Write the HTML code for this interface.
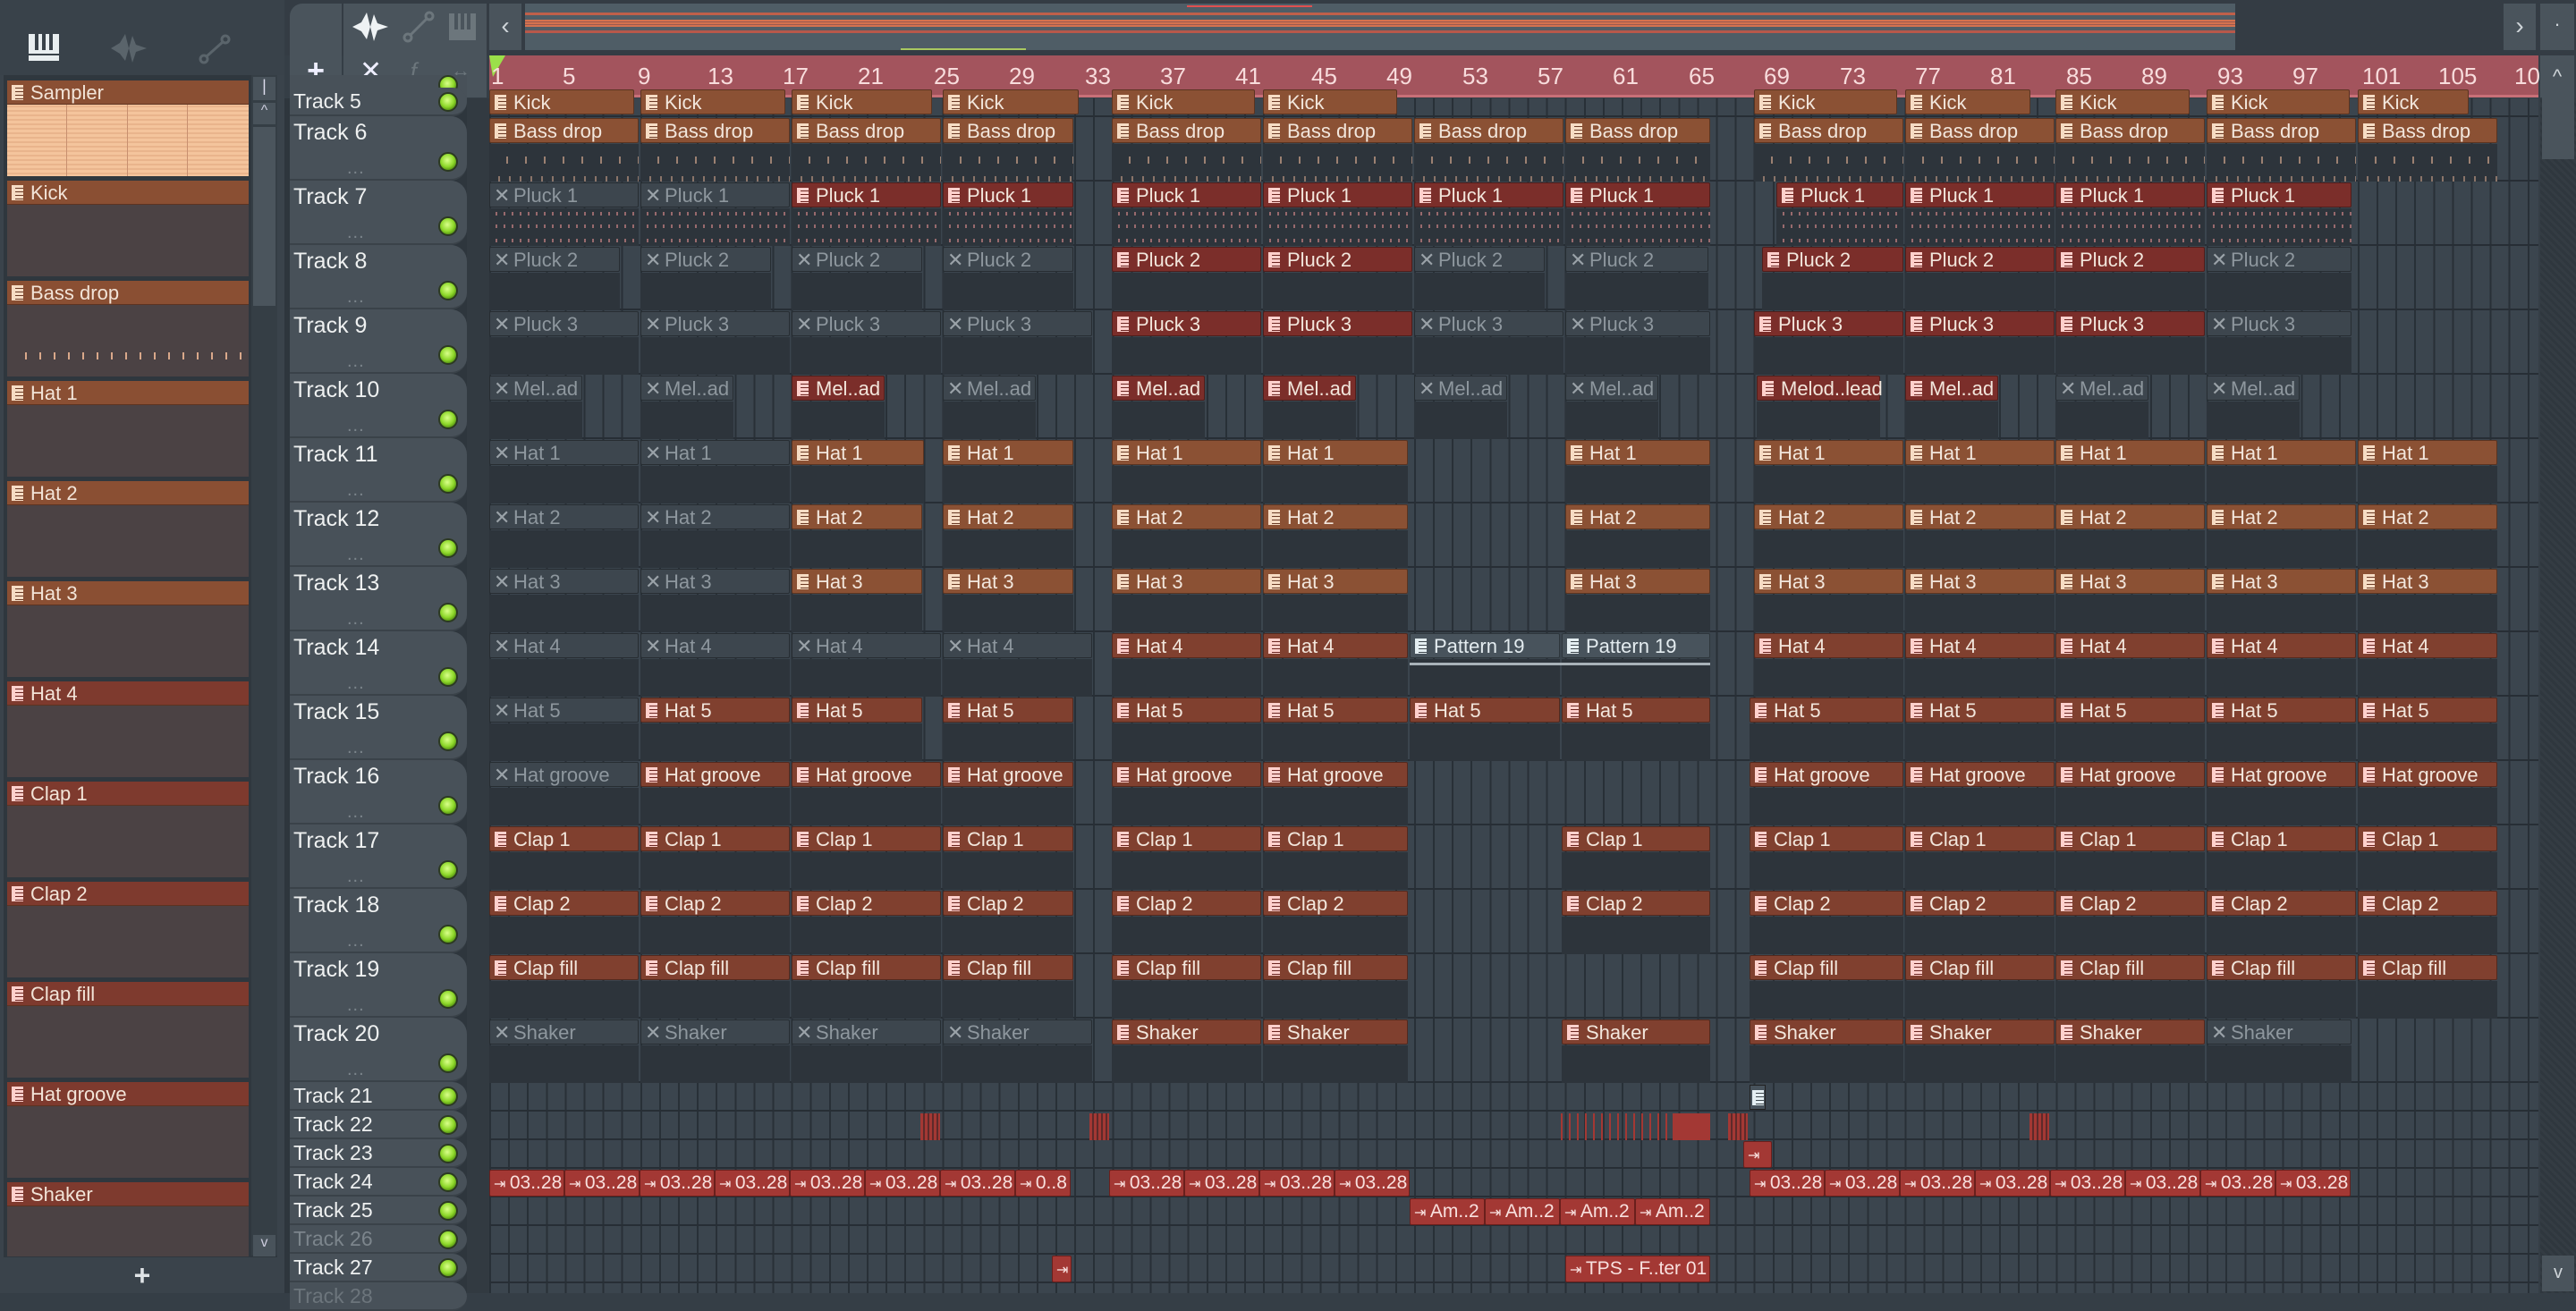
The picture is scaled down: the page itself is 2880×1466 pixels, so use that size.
<!DOCTYPE html>
<html><head><meta charset="utf-8"><style>
*{box-sizing:border-box;margin:0;padding:0}
body{width:2880px;height:1446px;background:#353e46;position:relative;overflow:hidden;font-family:"Liberation Sans Narrow","Liberation Sans",sans-serif;color:#e8e2dc}
.a{position:absolute}
#lp{left:0;top:0;width:318px;height:1446px;background:#3a434b}
#lt{left:0;top:0;width:318px;height:84px;background:#39424a}
.ch{position:absolute;left:8px;width:270px;height:107px;background:#4b4244}
.chh{height:27px;background:#8a4f33;border-bottom:1px solid #5d3321;font-size:22px;line-height:27px;padding-left:26px;position:relative;color:#f2e4d8}
.chh.r{background:#7e3a2e}
.ic{position:absolute;left:5px;top:5px;width:13px;height:17px;background:repeating-linear-gradient(180deg,#f6dcc4 0 3px,#6a3a26 3px 4px);border-left:4px solid #f6dcc4}
#grid{left:547px;top:110px;width:2291px;height:1336px;background:repeating-linear-gradient(90deg,#283037 0 2px,#3b454e 2px 21.1px)}
.hl{position:absolute;left:547px;width:2291px;height:2px;background:#272e35}
.th{position:absolute;left:324px;width:198px;background:#485159;border-radius:0 18px 18px 0;border-bottom:2px solid #3a4249;font-size:25px;color:#eef0f0;padding-left:4px}
.th .t{position:absolute;left:4px;top:4px}
.th .d{position:absolute;left:64px;bottom:0px;font-size:20px;color:#7b848b;letter-spacing:1px}
.led{position:absolute;right:10px;width:22px;height:22px;border-radius:50%;background:radial-gradient(circle at 45% 40%,#d9ff8a 0,#8ed82a 50%,#4f8a10 80%);border:2px solid #2c3a22}
.c{position:absolute;height:28px;border-radius:2px;font-size:22px;line-height:28px;padding-left:26px;white-space:nowrap;overflow:visible;color:#f2e6dc;border:1px solid rgba(0,0,0,.35)}
.c::after{content:'';position:absolute;left:-1px;right:-1px;top:28px;height:42px;background:#2d343b}
.c.k::after{height:0}
.o{background:#8b5134}
.r{background:#7b2e2a}
.h{background:#80402f}
.m{background:#3d464e;color:#8e979e}
.m .ic{background:none;border:none;color:#9aa2a8;font-size:22px;top:0;left:4px;width:auto;height:auto}
.m .ic::before{content:'✕'}
.p{background:#48535c;color:#e4ecf0}
.p .ic{background:repeating-linear-gradient(180deg,#e4eef2 0 3px,#40494f 3px 4px);border-left-color:#e4eef2}
.o .ic{background:repeating-linear-gradient(180deg,#f6dcc4 0 3px,#6a3a26 3px 4px)}
.r .ic,.h .ic{background:repeating-linear-gradient(180deg,#ffd0cc 0 3px,#6a2622 3px 4px);border-left-color:#ffd0cc}
.au{position:absolute;height:30px;background:#a33834;border:1px solid #6a1f1c;border-radius:2px;font-size:21px;line-height:28px;color:#f8e0de;padding-left:4px;white-space:nowrap;overflow:hidden}
.au::before{content:'⇥ ';font-size:16px}
.tk::after{background:repeating-linear-gradient(90deg,transparent 0 10px,rgba(230,180,150,.5) 10px 12px) bottom/100% 6px no-repeat,repeating-linear-gradient(90deg,transparent 0 19px,rgba(230,180,150,.6) 19px 21px) 0 14px/100% 8px no-repeat,#2d343b}
.tp::after{background:repeating-linear-gradient(90deg,transparent 0 7px,rgba(240,150,150,.55) 7px 9px) 0 4px/100% 4px no-repeat,repeating-linear-gradient(90deg,transparent 0 7px,rgba(240,150,150,.55) 7px 9px) 0 18px/100% 4px no-repeat,repeating-linear-gradient(90deg,transparent 0 7px,rgba(240,150,150,.55) 7px 9px) 0 34px/100% 4px no-repeat,#2d343b}
</style></head><body>
<!-- left panel -->
<div class="a" id="lp"></div>
<div class="a" id="lt"></div>
<svg class="a" style="left:32px;top:38px" width="34" height="30"><rect x="0" y="0" width="34" height="30" fill="#e8eef0"/><rect x="7" y="0" width="4" height="18" fill="#39424a"/><rect x="15" y="0" width="4" height="18" fill="#39424a"/><rect x="23" y="0" width="4" height="18" fill="#39424a"/><rect x="0" y="22" width="34" height="2" fill="#39424a"/></svg>
<svg class="a" style="left:122px;top:34px" width="44" height="40"><path d="M2 20 L12 14 L18 4 L22 20 L26 36 L30 24 L42 20 L30 16 L26 6 L22 20 L18 34 L12 26 Z" fill="#5a646b"/></svg>
<svg class="a" style="left:222px;top:38px" width="36" height="34"><circle cx="6" cy="28" r="4" fill="none" stroke="#5a646b" stroke-width="3"/><circle cx="30" cy="6" r="4" fill="none" stroke="#5a646b" stroke-width="3"/><line x1="9" y1="25" x2="27" y2="9" stroke="#5a646b" stroke-width="3"/></svg>
<div class="a" style="left:4px;top:84px;width:306px;height:1322px;background:#2f373e"></div>
<div class="a" style="left:281px;top:84px;width:29px;height:1320px;background:#353e45"></div>
<div class="a" style="left:283px;top:86px;width:25px;height:26px;background:#49535b;color:#dde;font-size:18px;text-align:center">|</div>
<div class="a" style="left:283px;top:115px;width:25px;height:24px;background:#49535b;color:#ccd;font-size:16px;text-align:center">^</div>
<div class="a" style="left:283px;top:142px;width:25px;height:200px;background:#4b555d"></div>
<div class="a" style="left:283px;top:1381px;width:25px;height:24px;background:#49535b;color:#ccd;font-size:16px;text-align:center">v</div>
<div class="a" style="left:0;top:1408px;width:318px;height:38px;background:#3a434b;color:#dfe3e6;font-size:32px;text-align:center;line-height:36px;font-weight:bold">+</div>
<div class="ch" style="top:90px;background:repeating-linear-gradient(180deg,#f4c49c 0 3px,#e9b48c 3px 5px)"><div class="chh"><span class="ic"></span>Sampler</div><div class="a" style="left:66px;top:27px;width:1px;height:80px;background:#c89070"></div><div class="a" style="left:134px;top:27px;width:1px;height:80px;background:#c89070"></div><div class="a" style="left:201px;top:27px;width:1px;height:80px;background:#c89070"></div></div>
<div class="ch" style="top:202px"><div class="chh"><span class="ic"></span>Kick</div></div>
<div class="ch" style="top:314px"><div class="chh"><span class="ic"></span>Bass drop</div><div class="a" style="left:6px;top:80px;width:260px;height:8px;background:repeating-linear-gradient(90deg,transparent 0 14px,#d9a88a 14px 16px)"></div></div>
<div class="ch" style="top:426px"><div class="chh"><span class="ic"></span>Hat 1</div></div>
<div class="ch" style="top:538px"><div class="chh"><span class="ic"></span>Hat 2</div></div>
<div class="ch" style="top:650px"><div class="chh"><span class="ic"></span>Hat 3</div></div>
<div class="ch" style="top:762px"><div class="chh r"><span class="ic"></span>Hat 4</div></div>
<div class="ch" style="top:874px"><div class="chh r"><span class="ic"></span>Clap 1</div></div>
<div class="ch" style="top:986px"><div class="chh r"><span class="ic"></span>Clap 2</div></div>
<div class="ch" style="top:1098px"><div class="chh r"><span class="ic"></span>Clap fill</div></div>
<div class="ch" style="top:1210px"><div class="chh r"><span class="ic"></span>Hat groove</div></div>
<div class="ch" style="top:1322px;height:83px"><div class="chh r"><span class="ic"></span>Shaker</div></div>

<!-- toolbar top of playlist -->
<div class="a" style="left:318px;top:0;width:2562px;height:62px;background:#343c44"></div>
<div class="a" style="left:324px;top:4px;width:58px;height:105px;background:#4a545c;border-radius:14px 0 0 0;color:#eef;font-size:34px;text-align:center;line-height:150px;font-weight:bold">+</div>
<div class="a" style="left:384px;top:4px;width:160px;height:105px;background:#4a545c"></div>
<svg class="a" style="left:392px;top:10px" width="44" height="40"><path d="M2 20 L12 15 L18 4 L22 20 L26 36 L30 24 L42 20 L30 16 L26 6 L22 20 L18 34 L12 25 Z" fill="#eef2f4"/></svg>
<svg class="a" style="left:450px;top:12px" width="36" height="36"><circle cx="6" cy="30" r="4" fill="none" stroke="#6c767c" stroke-width="3"/><circle cx="30" cy="6" r="4" fill="none" stroke="#6c767c" stroke-width="3"/><line x1="9" y1="27" x2="27" y2="9" stroke="#6c767c" stroke-width="3"/></svg>
<svg class="a" style="left:502px;top:15px" width="30" height="30"><rect width="30" height="30" fill="#6c767c"/><rect x="6" y="0" width="4" height="18" fill="#4a545c"/><rect x="13" y="0" width="4" height="18" fill="#4a545c"/><rect x="20" y="0" width="4" height="18" fill="#4a545c"/></svg>
<div class="a" style="left:402px;top:62px;color:#eef;font-size:30px">✕</div>
<div class="a" style="left:455px;top:64px;color:#6c767c;font-size:26px;font-style:italic">ƒ</div>
<div class="a" style="left:504px;top:66px;color:#6c767c;font-size:22px">↔</div>
<div class="a" style="left:547px;top:4px;width:36px;height:52px;background:#4a545c;color:#cfd5d9;font-size:28px;text-align:center;line-height:50px">‹</div>
<div class="a" style="left:587px;top:4px;width:1912px;height:52px;background:#4f5d66">
 <div class="a" style="left:0;top:10px;width:1912px;height:3px;background:#c0604a"></div>
 <div class="a" style="left:0;top:18px;width:1912px;height:8px;background:repeating-linear-gradient(180deg,#d4724f 0 2px,#9a5a50 2px 3px)"></div>
 <div class="a" style="left:0;top:30px;width:1912px;height:3px;background:#b8584a"></div>
 <div class="a" style="left:420px;top:50px;width:140px;height:2px;background:#a8c860"></div>
 <div class="a" style="left:740px;top:2px;width:140px;height:2px;background:#e05050"></div>
</div>
<div class="a" style="left:2799px;top:4px;width:36px;height:52px;background:#4a545c;color:#cfd5d9;font-size:28px;text-align:center;line-height:50px">›</div>
<div class="a" style="left:2840px;top:4px;width:38px;height:52px;background:#4a545c;color:#cfd5d9;font-size:22px;text-align:center;line-height:46px">·</div>
<!-- ruler -->
<div class="a" style="left:547px;top:62px;width:2291px;height:47px;background:#a3545d;border-bottom:3px solid #c87078;font-size:26px;color:#f8dcdc;line-height:46px">
<svg class="a" style="left:0;top:0" width="20" height="26"><path d="M0 0 L18 0 L4 24 Z" fill="#9be04a"/></svg>
<span class="a" style="left:2px">1</span><span class="a" style="left:82px">5</span><span class="a" style="left:166px">9</span><span class="a" style="left:244px">13</span><span class="a" style="left:328px">17</span><span class="a" style="left:412px">21</span><span class="a" style="left:497px">25</span><span class="a" style="left:581px">29</span><span class="a" style="left:666px">33</span><span class="a" style="left:750px">37</span><span class="a" style="left:834px">41</span><span class="a" style="left:919px">45</span><span class="a" style="left:1003px">49</span><span class="a" style="left:1088px">53</span><span class="a" style="left:1172px">57</span><span class="a" style="left:1256px">61</span><span class="a" style="left:1341px">65</span><span class="a" style="left:1425px">69</span><span class="a" style="left:1510px">73</span><span class="a" style="left:1594px">77</span><span class="a" style="left:1678px">81</span><span class="a" style="left:1763px">85</span><span class="a" style="left:1847px">89</span><span class="a" style="left:1932px">93</span><span class="a" style="left:2016px">97</span><span class="a" style="left:2094px">101</span><span class="a" style="left:2179px">105</span><span class="a" style="left:2264px">10</span>
</div>
<div class="a" style="left:2840px;top:62px;width:38px;height:47px;background:#4a545c;color:#cfd5d9;font-size:22px;text-align:center;line-height:48px">^</div>
<div class="a" style="left:2840px;top:110px;width:40px;height:1336px;background:repeating-linear-gradient(45deg,#2f373e 0 3px,#343c43 3px 6px)"></div>
<div class="a" style="left:2842px;top:100px;width:36px;height:78px;background:#4a545c"></div>
<div class="a" style="left:2842px;top:1404px;width:36px;height:40px;background:#4a545c;color:#cfd5d9;font-size:20px;text-align:center;line-height:38px">v</div>
<!-- track header column bg -->
<div class="a" style="left:318px;top:110px;width:229px;height:1336px;background:#2e363d"></div>
<div class="a" style="left:522px;top:110px;width:25px;height:1336px;background:#323a41"></div>
<div id="grid" class="a"></div>
<!-- row lines -->
<div class="hl" style="top:129px"></div><div class="hl" style="top:201px"></div><div class="hl" style="top:273px"></div><div class="hl" style="top:345px"></div><div class="hl" style="top:417px"></div><div class="hl" style="top:489px"></div><div class="hl" style="top:561px"></div><div class="hl" style="top:633px"></div><div class="hl" style="top:705px"></div><div class="hl" style="top:777px"></div><div class="hl" style="top:849px"></div><div class="hl" style="top:921px"></div><div class="hl" style="top:993px"></div><div class="hl" style="top:1065px"></div><div class="hl" style="top:1137px"></div><div class="hl" style="top:1209px"></div><div class="hl" style="top:1241px"></div><div class="hl" style="top:1273px"></div><div class="hl" style="top:1305px"></div><div class="hl" style="top:1337px"></div><div class="hl" style="top:1369px"></div><div class="hl" style="top:1401px"></div><div class="hl" style="top:1433px"></div>
<!-- track headers -->
<div class="th" style="top:84px;height:46px;border-radius:0 0 18px 0"><span class="d" style="bottom:0">...</span><span class="led" style="top:0"></span></div>
<div class="th" style="top:98px;height:32px;font-size:23px"><span class="t" style="top:2px">Track 5</span><span class="led" style="top:5px"></span></div>
<div class="th" style="top:130px;height:72px"><span class="t">Track 6</span><span class="d">...</span><span class="led" style="top:40px"></span></div>
<div class="th" style="top:202px;height:72px"><span class="t">Track 7</span><span class="d">...</span><span class="led" style="top:40px"></span></div>
<div class="th" style="top:274px;height:72px"><span class="t">Track 8</span><span class="d">...</span><span class="led" style="top:40px"></span></div>
<div class="th" style="top:346px;height:72px"><span class="t">Track 9</span><span class="d">...</span><span class="led" style="top:40px"></span></div>
<div class="th" style="top:418px;height:72px"><span class="t">Track 10</span><span class="d">...</span><span class="led" style="top:40px"></span></div>
<div class="th" style="top:490px;height:72px"><span class="t">Track 11</span><span class="d">...</span><span class="led" style="top:40px"></span></div>
<div class="th" style="top:562px;height:72px"><span class="t">Track 12</span><span class="d">...</span><span class="led" style="top:40px"></span></div>
<div class="th" style="top:634px;height:72px"><span class="t">Track 13</span><span class="d">...</span><span class="led" style="top:40px"></span></div>
<div class="th" style="top:706px;height:72px"><span class="t">Track 14</span><span class="d">...</span><span class="led" style="top:40px"></span></div>
<div class="th" style="top:778px;height:72px"><span class="t">Track 15</span><span class="d">...</span><span class="led" style="top:40px"></span></div>
<div class="th" style="top:850px;height:72px"><span class="t">Track 16</span><span class="d">...</span><span class="led" style="top:40px"></span></div>
<div class="th" style="top:922px;height:72px"><span class="t">Track 17</span><span class="d">...</span><span class="led" style="top:40px"></span></div>
<div class="th" style="top:994px;height:72px"><span class="t">Track 18</span><span class="d">...</span><span class="led" style="top:40px"></span></div>
<div class="th" style="top:1066px;height:72px"><span class="t">Track 19</span><span class="d">...</span><span class="led" style="top:40px"></span></div>
<div class="th" style="top:1138px;height:72px"><span class="t">Track 20</span><span class="d">...</span><span class="led" style="top:40px"></span></div>
<div class="th" style="top:1210px;height:32px;font-size:23px"><span class="t" style="top:2px">Track 21</span><span class="led" style="top:5px"></span></div>
<div class="th" style="top:1242px;height:32px;font-size:23px"><span class="t" style="top:2px">Track 22</span><span class="led" style="top:5px"></span></div>
<div class="th" style="top:1274px;height:32px;font-size:23px"><span class="t" style="top:2px">Track 23</span><span class="led" style="top:5px"></span></div>
<div class="th" style="top:1306px;height:32px;font-size:23px"><span class="t" style="top:2px">Track 24</span><span class="led" style="top:5px"></span></div>
<div class="th" style="top:1338px;height:32px;font-size:23px"><span class="t" style="top:2px">Track 25</span><span class="led" style="top:5px"></span></div>
<div class="th" style="top:1370px;height:32px;font-size:23px;color:#7c858c"><span class="t" style="top:2px">Track 26</span><span class="led" style="top:5px"></span></div>
<div class="th" style="top:1402px;height:32px;font-size:23px"><span class="t" style="top:2px">Track 27</span><span class="led" style="top:5px"></span></div>
<div class="th" style="top:1434px;height:32px;font-size:23px;color:#6c757c"><span class="t" style="top:2px">Track 28</span></div>

<!-- Track 5 Kick -->
<div class="c o k" style="left:547px;top:100px;width:162px"><span class="ic"></span>Kick</div>
<div class="c o k" style="left:716px;top:100px;width:162px"><span class="ic"></span>Kick</div>
<div class="c o k" style="left:885px;top:100px;width:157px"><span class="ic"></span>Kick</div>
<div class="c o k" style="left:1054px;top:100px;width:152px"><span class="ic"></span>Kick</div>
<div class="c o k" style="left:1243px;top:100px;width:160px"><span class="ic"></span>Kick</div>
<div class="c o k" style="left:1412px;top:100px;width:150px"><span class="ic"></span>Kick</div>
<div class="c o k" style="left:1961px;top:100px;width:160px"><span class="ic"></span>Kick</div>
<div class="c o k" style="left:2130px;top:100px;width:140px"><span class="ic"></span>Kick</div>
<div class="c o k" style="left:2298px;top:100px;width:150px"><span class="ic"></span>Kick</div>
<div class="c o k" style="left:2467px;top:100px;width:160px"><span class="ic"></span>Kick</div>
<div class="c o k" style="left:2636px;top:100px;width:124px"><span class="ic"></span>Kick</div>
<!-- Track 6 Bass drop -->
<div class="c o tk" style="left:547px;top:132px;width:167px"><span class="ic"></span>Bass drop</div>
<div class="c o tk" style="left:716px;top:132px;width:167px"><span class="ic"></span>Bass drop</div>
<div class="c o tk" style="left:885px;top:132px;width:167px"><span class="ic"></span>Bass drop</div>
<div class="c o tk" style="left:1054px;top:132px;width:146px"><span class="ic"></span>Bass drop</div>
<div class="c o tk" style="left:1243px;top:132px;width:167px"><span class="ic"></span>Bass drop</div>
<div class="c o tk" style="left:1412px;top:132px;width:167px"><span class="ic"></span>Bass drop</div>
<div class="c o tk" style="left:1581px;top:132px;width:167px"><span class="ic"></span>Bass drop</div>
<div class="c o tk" style="left:1750px;top:132px;width:162px"><span class="ic"></span>Bass drop</div>
<div class="c o tk" style="left:1961px;top:132px;width:167px"><span class="ic"></span>Bass drop</div>
<div class="c o tk" style="left:2130px;top:132px;width:167px"><span class="ic"></span>Bass drop</div>
<div class="c o tk" style="left:2298px;top:132px;width:167px"><span class="ic"></span>Bass drop</div>
<div class="c o tk" style="left:2467px;top:132px;width:167px"><span class="ic"></span>Bass drop</div>
<div class="c o tk" style="left:2636px;top:132px;width:156px"><span class="ic"></span>Bass drop</div>
<!-- Track 7 Pluck 1 -->
<div class="c m tp" style="left:547px;top:204px;width:167px"><span class="ic"></span>Pluck 1</div>
<div class="c m tp" style="left:716px;top:204px;width:167px"><span class="ic"></span>Pluck 1</div>
<div class="c r tp" style="left:885px;top:204px;width:167px"><span class="ic"></span>Pluck 1</div>
<div class="c r tp" style="left:1054px;top:204px;width:146px"><span class="ic"></span>Pluck 1</div>
<div class="c r tp" style="left:1243px;top:204px;width:167px"><span class="ic"></span>Pluck 1</div>
<div class="c r tp" style="left:1412px;top:204px;width:167px"><span class="ic"></span>Pluck 1</div>
<div class="c r tp" style="left:1581px;top:204px;width:167px"><span class="ic"></span>Pluck 1</div>
<div class="c r tp" style="left:1750px;top:204px;width:162px"><span class="ic"></span>Pluck 1</div>
<div class="c r tp" style="left:1986px;top:204px;width:142px"><span class="ic"></span>Pluck 1</div>
<div class="c r tp" style="left:2130px;top:204px;width:167px"><span class="ic"></span>Pluck 1</div>
<div class="c r tp" style="left:2298px;top:204px;width:167px"><span class="ic"></span>Pluck 1</div>
<div class="c r tp" style="left:2467px;top:204px;width:162px"><span class="ic"></span>Pluck 1</div>
<!-- Track 8 Pluck 2 -->
<div class="c m" style="left:547px;top:276px;width:146px"><span class="ic"></span>Pluck 2</div>
<div class="c m" style="left:716px;top:276px;width:146px"><span class="ic"></span>Pluck 2</div>
<div class="c m" style="left:885px;top:276px;width:146px"><span class="ic"></span>Pluck 2</div>
<div class="c m" style="left:1054px;top:276px;width:146px"><span class="ic"></span>Pluck 2</div>
<div class="c r" style="left:1243px;top:276px;width:167px"><span class="ic"></span>Pluck 2</div>
<div class="c r" style="left:1412px;top:276px;width:167px"><span class="ic"></span>Pluck 2</div>
<div class="c m" style="left:1581px;top:276px;width:146px"><span class="ic"></span>Pluck 2</div>
<div class="c m" style="left:1750px;top:276px;width:160px"><span class="ic"></span>Pluck 2</div>
<div class="c r" style="left:1970px;top:276px;width:158px"><span class="ic"></span>Pluck 2</div>
<div class="c r" style="left:2130px;top:276px;width:167px"><span class="ic"></span>Pluck 2</div>
<div class="c r" style="left:2298px;top:276px;width:167px"><span class="ic"></span>Pluck 2</div>
<div class="c m" style="left:2467px;top:276px;width:162px"><span class="ic"></span>Pluck 2</div>
<!-- Track 9 Pluck 3 -->
<div class="c m" style="left:547px;top:348px;width:167px"><span class="ic"></span>Pluck 3</div>
<div class="c m" style="left:716px;top:348px;width:167px"><span class="ic"></span>Pluck 3</div>
<div class="c m" style="left:885px;top:348px;width:167px"><span class="ic"></span>Pluck 3</div>
<div class="c m" style="left:1054px;top:348px;width:167px"><span class="ic"></span>Pluck 3</div>
<div class="c r" style="left:1243px;top:348px;width:167px"><span class="ic"></span>Pluck 3</div>
<div class="c r" style="left:1412px;top:348px;width:167px"><span class="ic"></span>Pluck 3</div>
<div class="c m" style="left:1581px;top:348px;width:167px"><span class="ic"></span>Pluck 3</div>
<div class="c m" style="left:1750px;top:348px;width:162px"><span class="ic"></span>Pluck 3</div>
<div class="c r" style="left:1961px;top:348px;width:167px"><span class="ic"></span>Pluck 3</div>
<div class="c r" style="left:2130px;top:348px;width:167px"><span class="ic"></span>Pluck 3</div>
<div class="c r" style="left:2298px;top:348px;width:167px"><span class="ic"></span>Pluck 3</div>
<div class="c m" style="left:2467px;top:348px;width:162px"><span class="ic"></span>Pluck 3</div>
<!-- Track 10 Mel..ad -->
<div class="c m" style="left:547px;top:420px;width:104px"><span class="ic"></span>Mel..ad</div>
<div class="c m" style="left:716px;top:420px;width:104px"><span class="ic"></span>Mel..ad</div>
<div class="c r" style="left:885px;top:420px;width:104px"><span class="ic"></span>Mel..ad</div>
<div class="c m" style="left:1054px;top:420px;width:104px"><span class="ic"></span>Mel..ad</div>
<div class="c r" style="left:1243px;top:420px;width:104px"><span class="ic"></span>Mel..ad</div>
<div class="c r" style="left:1412px;top:420px;width:104px"><span class="ic"></span>Mel..ad</div>
<div class="c m" style="left:1581px;top:420px;width:104px"><span class="ic"></span>Mel..ad</div>
<div class="c m" style="left:1750px;top:420px;width:104px"><span class="ic"></span>Mel..ad</div>
<div class="c r" style="left:1964px;top:420px;width:138px"><span class="ic"></span>Melod..lead</div>
<div class="c r" style="left:2130px;top:420px;width:104px"><span class="ic"></span>Mel..ad</div>
<div class="c m" style="left:2298px;top:420px;width:104px"><span class="ic"></span>Mel..ad</div>
<div class="c m" style="left:2467px;top:420px;width:104px"><span class="ic"></span>Mel..ad</div>
<!-- Track 11-13 Hats -->
<div class="c m" style="left:547px;top:492px;width:167px"><span class="ic"></span>Hat 1</div>
<div class="c m" style="left:716px;top:492px;width:167px"><span class="ic"></span>Hat 1</div>
<div class="c o" style="left:885px;top:492px;width:148px"><span class="ic"></span>Hat 1</div>
<div class="c o" style="left:1054px;top:492px;width:146px"><span class="ic"></span>Hat 1</div>
<div class="c o" style="left:1243px;top:492px;width:167px"><span class="ic"></span>Hat 1</div>
<div class="c o" style="left:1412px;top:492px;width:162px"><span class="ic"></span>Hat 1</div>
<div class="c o" style="left:1750px;top:492px;width:162px"><span class="ic"></span>Hat 1</div>
<div class="c o" style="left:1961px;top:492px;width:167px"><span class="ic"></span>Hat 1</div>
<div class="c o" style="left:2130px;top:492px;width:167px"><span class="ic"></span>Hat 1</div>
<div class="c o" style="left:2298px;top:492px;width:167px"><span class="ic"></span>Hat 1</div>
<div class="c o" style="left:2467px;top:492px;width:167px"><span class="ic"></span>Hat 1</div>
<div class="c o" style="left:2636px;top:492px;width:156px"><span class="ic"></span>Hat 1</div>

<div class="c m" style="left:547px;top:564px;width:167px"><span class="ic"></span>Hat 2</div>
<div class="c m" style="left:716px;top:564px;width:167px"><span class="ic"></span>Hat 2</div>
<div class="c o" style="left:885px;top:564px;width:146px"><span class="ic"></span>Hat 2</div>
<div class="c o" style="left:1054px;top:564px;width:146px"><span class="ic"></span>Hat 2</div>
<div class="c o" style="left:1243px;top:564px;width:167px"><span class="ic"></span>Hat 2</div>
<div class="c o" style="left:1412px;top:564px;width:162px"><span class="ic"></span>Hat 2</div>
<div class="c o" style="left:1750px;top:564px;width:162px"><span class="ic"></span>Hat 2</div>
<div class="c o" style="left:1961px;top:564px;width:167px"><span class="ic"></span>Hat 2</div>
<div class="c o" style="left:2130px;top:564px;width:167px"><span class="ic"></span>Hat 2</div>
<div class="c o" style="left:2298px;top:564px;width:167px"><span class="ic"></span>Hat 2</div>
<div class="c o" style="left:2467px;top:564px;width:167px"><span class="ic"></span>Hat 2</div>
<div class="c o" style="left:2636px;top:564px;width:156px"><span class="ic"></span>Hat 2</div>

<div class="c m" style="left:547px;top:636px;width:167px"><span class="ic"></span>Hat 3</div>
<div class="c m" style="left:716px;top:636px;width:167px"><span class="ic"></span>Hat 3</div>
<div class="c o" style="left:885px;top:636px;width:146px"><span class="ic"></span>Hat 3</div>
<div class="c o" style="left:1054px;top:636px;width:146px"><span class="ic"></span>Hat 3</div>
<div class="c o" style="left:1243px;top:636px;width:167px"><span class="ic"></span>Hat 3</div>
<div class="c o" style="left:1412px;top:636px;width:162px"><span class="ic"></span>Hat 3</div>
<div class="c o" style="left:1750px;top:636px;width:162px"><span class="ic"></span>Hat 3</div>
<div class="c o" style="left:1961px;top:636px;width:167px"><span class="ic"></span>Hat 3</div>
<div class="c o" style="left:2130px;top:636px;width:167px"><span class="ic"></span>Hat 3</div>
<div class="c o" style="left:2298px;top:636px;width:167px"><span class="ic"></span>Hat 3</div>
<div class="c o" style="left:2467px;top:636px;width:167px"><span class="ic"></span>Hat 3</div>
<div class="c o" style="left:2636px;top:636px;width:156px"><span class="ic"></span>Hat 3</div>
<!-- Track 14 -->
<div class="c m" style="left:547px;top:708px;width:167px"><span class="ic"></span>Hat 4</div>
<div class="c m" style="left:716px;top:708px;width:167px"><span class="ic"></span>Hat 4</div>
<div class="c m" style="left:885px;top:708px;width:167px"><span class="ic"></span>Hat 4</div>
<div class="c m" style="left:1054px;top:708px;width:167px"><span class="ic"></span>Hat 4</div>
<div class="c h" style="left:1243px;top:708px;width:167px"><span class="ic"></span>Hat 4</div>
<div class="c h" style="left:1412px;top:708px;width:162px"><span class="ic"></span>Hat 4</div>
<div class="c p" style="left:1576px;top:708px;width:168px"><span class="ic"></span>Pattern 19</div>
<div class="c p" style="left:1746px;top:708px;width:166px"><span class="ic"></span>Pattern 19</div>
<div class="a" style="left:1576px;top:741px;width:336px;height:3px;background:#a8b2b8"></div>
<div class="c h" style="left:1961px;top:708px;width:167px"><span class="ic"></span>Hat 4</div>
<div class="c h" style="left:2130px;top:708px;width:167px"><span class="ic"></span>Hat 4</div>
<div class="c h" style="left:2298px;top:708px;width:167px"><span class="ic"></span>Hat 4</div>
<div class="c h" style="left:2467px;top:708px;width:167px"><span class="ic"></span>Hat 4</div>
<div class="c h" style="left:2636px;top:708px;width:156px"><span class="ic"></span>Hat 4</div>
<!-- Track 15 -->
<div class="c m" style="left:547px;top:780px;width:167px"><span class="ic"></span>Hat 5</div>
<div class="c h" style="left:716px;top:780px;width:167px"><span class="ic"></span>Hat 5</div>
<div class="c h" style="left:885px;top:780px;width:146px"><span class="ic"></span>Hat 5</div>
<div class="c h" style="left:1054px;top:780px;width:146px"><span class="ic"></span>Hat 5</div>
<div class="c h" style="left:1243px;top:780px;width:167px"><span class="ic"></span>Hat 5</div>
<div class="c h" style="left:1412px;top:780px;width:162px"><span class="ic"></span>Hat 5</div>
<div class="c h" style="left:1576px;top:780px;width:168px"><span class="ic"></span>Hat 5</div>
<div class="c h" style="left:1746px;top:780px;width:166px"><span class="ic"></span>Hat 5</div>
<div class="c h" style="left:1956px;top:780px;width:172px"><span class="ic"></span>Hat 5</div>
<div class="c h" style="left:2130px;top:780px;width:167px"><span class="ic"></span>Hat 5</div>
<div class="c h" style="left:2298px;top:780px;width:167px"><span class="ic"></span>Hat 5</div>
<div class="c h" style="left:2467px;top:780px;width:167px"><span class="ic"></span>Hat 5</div>
<div class="c h" style="left:2636px;top:780px;width:156px"><span class="ic"></span>Hat 5</div>
<!-- Track 16 -->
<div class="c m" style="left:547px;top:852px;width:167px"><span class="ic"></span>Hat groove</div>
<div class="c h" style="left:716px;top:852px;width:167px"><span class="ic"></span>Hat groove</div>
<div class="c h" style="left:885px;top:852px;width:167px"><span class="ic"></span>Hat groove</div>
<div class="c h" style="left:1054px;top:852px;width:146px"><span class="ic"></span>Hat groove</div>
<div class="c h" style="left:1243px;top:852px;width:167px"><span class="ic"></span>Hat groove</div>
<div class="c h" style="left:1412px;top:852px;width:162px"><span class="ic"></span>Hat groove</div>
<div class="c h" style="left:1956px;top:852px;width:172px"><span class="ic"></span>Hat groove</div>
<div class="c h" style="left:2130px;top:852px;width:167px"><span class="ic"></span>Hat groove</div>
<div class="c h" style="left:2298px;top:852px;width:167px"><span class="ic"></span>Hat groove</div>
<div class="c h" style="left:2467px;top:852px;width:167px"><span class="ic"></span>Hat groove</div>
<div class="c h" style="left:2636px;top:852px;width:156px"><span class="ic"></span>Hat groove</div>
<!-- Track 17 -->
<div class="c h" style="left:547px;top:924px;width:167px"><span class="ic"></span>Clap 1</div>
<div class="c h" style="left:716px;top:924px;width:167px"><span class="ic"></span>Clap 1</div>
<div class="c h" style="left:885px;top:924px;width:167px"><span class="ic"></span>Clap 1</div>
<div class="c h" style="left:1054px;top:924px;width:146px"><span class="ic"></span>Clap 1</div>
<div class="c h" style="left:1243px;top:924px;width:167px"><span class="ic"></span>Clap 1</div>
<div class="c h" style="left:1412px;top:924px;width:162px"><span class="ic"></span>Clap 1</div>
<div class="c h" style="left:1746px;top:924px;width:166px"><span class="ic"></span>Clap 1</div>
<div class="c h" style="left:1956px;top:924px;width:172px"><span class="ic"></span>Clap 1</div>
<div class="c h" style="left:2130px;top:924px;width:167px"><span class="ic"></span>Clap 1</div>
<div class="c h" style="left:2298px;top:924px;width:167px"><span class="ic"></span>Clap 1</div>
<div class="c h" style="left:2467px;top:924px;width:167px"><span class="ic"></span>Clap 1</div>
<div class="c h" style="left:2636px;top:924px;width:156px"><span class="ic"></span>Clap 1</div>
<!-- Track 18 -->
<div class="c h" style="left:547px;top:996px;width:167px"><span class="ic"></span>Clap 2</div>
<div class="c h" style="left:716px;top:996px;width:167px"><span class="ic"></span>Clap 2</div>
<div class="c h" style="left:885px;top:996px;width:167px"><span class="ic"></span>Clap 2</div>
<div class="c h" style="left:1054px;top:996px;width:146px"><span class="ic"></span>Clap 2</div>
<div class="c h" style="left:1243px;top:996px;width:167px"><span class="ic"></span>Clap 2</div>
<div class="c h" style="left:1412px;top:996px;width:162px"><span class="ic"></span>Clap 2</div>
<div class="c h" style="left:1746px;top:996px;width:166px"><span class="ic"></span>Clap 2</div>
<div class="c h" style="left:1956px;top:996px;width:172px"><span class="ic"></span>Clap 2</div>
<div class="c h" style="left:2130px;top:996px;width:167px"><span class="ic"></span>Clap 2</div>
<div class="c h" style="left:2298px;top:996px;width:167px"><span class="ic"></span>Clap 2</div>
<div class="c h" style="left:2467px;top:996px;width:167px"><span class="ic"></span>Clap 2</div>
<div class="c h" style="left:2636px;top:996px;width:156px"><span class="ic"></span>Clap 2</div>
<!-- Track 19 -->
<div class="c h" style="left:547px;top:1068px;width:167px"><span class="ic"></span>Clap fill</div>
<div class="c h" style="left:716px;top:1068px;width:167px"><span class="ic"></span>Clap fill</div>
<div class="c h" style="left:885px;top:1068px;width:167px"><span class="ic"></span>Clap fill</div>
<div class="c h" style="left:1054px;top:1068px;width:146px"><span class="ic"></span>Clap fill</div>
<div class="c h" style="left:1243px;top:1068px;width:167px"><span class="ic"></span>Clap fill</div>
<div class="c h" style="left:1412px;top:1068px;width:162px"><span class="ic"></span>Clap fill</div>
<div class="c h" style="left:1956px;top:1068px;width:172px"><span class="ic"></span>Clap fill</div>
<div class="c h" style="left:2130px;top:1068px;width:167px"><span class="ic"></span>Clap fill</div>
<div class="c h" style="left:2298px;top:1068px;width:167px"><span class="ic"></span>Clap fill</div>
<div class="c h" style="left:2467px;top:1068px;width:167px"><span class="ic"></span>Clap fill</div>
<div class="c h" style="left:2636px;top:1068px;width:156px"><span class="ic"></span>Clap fill</div>
<!-- Track 20 -->
<div class="c m" style="left:547px;top:1140px;width:167px"><span class="ic"></span>Shaker</div>
<div class="c m" style="left:716px;top:1140px;width:167px"><span class="ic"></span>Shaker</div>
<div class="c m" style="left:885px;top:1140px;width:167px"><span class="ic"></span>Shaker</div>
<div class="c m" style="left:1054px;top:1140px;width:167px"><span class="ic"></span>Shaker</div>
<div class="c h" style="left:1243px;top:1140px;width:167px"><span class="ic"></span>Shaker</div>
<div class="c h" style="left:1412px;top:1140px;width:162px"><span class="ic"></span>Shaker</div>
<div class="c h" style="left:1746px;top:1140px;width:166px"><span class="ic"></span>Shaker</div>
<div class="c h" style="left:1956px;top:1140px;width:172px"><span class="ic"></span>Shaker</div>
<div class="c h" style="left:2130px;top:1140px;width:167px"><span class="ic"></span>Shaker</div>
<div class="c h" style="left:2298px;top:1140px;width:167px"><span class="ic"></span>Shaker</div>
<div class="c m" style="left:2467px;top:1140px;width:162px"><span class="ic"></span>Shaker</div>
<!-- Track 21 icon -->
<div class="a" style="left:1956px;top:1213px;width:18px;height:28px;background:#48535c;border:1px solid #222"><span class="ic" style="left:2px;background:repeating-linear-gradient(180deg,#e4eef2 0 3px,#40494f 3px 4px);border-left-color:#e4eef2"></span></div>
<!-- Track 22 bits -->
<div class="a" style="left:1029px;top:1245px;width:22px;height:30px;background:repeating-linear-gradient(90deg,#a33834 0 3px,#5e2a2a 3px 5px)"></div>
<div class="a" style="left:1218px;top:1245px;width:22px;height:30px;background:repeating-linear-gradient(90deg,#a33834 0 3px,#5e2a2a 3px 5px)"></div>
<div class="a" style="left:1745px;top:1245px;width:125px;height:30px;background:repeating-linear-gradient(90deg,#a33834 0 2px,transparent 2px 9px)"></div>
<div class="a" style="left:1870px;top:1245px;width:42px;height:30px;background:#a33834"></div>
<div class="a" style="left:1932px;top:1245px;width:22px;height:30px;background:repeating-linear-gradient(90deg,#a33834 0 3px,#5e2a2a 3px 5px)"></div>
<div class="a" style="left:2269px;top:1245px;width:22px;height:30px;background:repeating-linear-gradient(90deg,#a33834 0 3px,#5e2a2a 3px 5px)"></div>
<!-- Track 23 -->
<div class="au" style="left:1949px;top:1276px;width:32px"></div>
<!-- Track 24 -->
<div class="au" style="left:547px;top:1308px;width:84px">03..28</div><div class="au" style="left:631px;top:1308px;width:84px">03..28</div><div class="au" style="left:715px;top:1308px;width:84px">03..28</div><div class="au" style="left:799px;top:1308px;width:84px">03..28</div><div class="au" style="left:883px;top:1308px;width:84px">03..28</div><div class="au" style="left:967px;top:1308px;width:84px">03..28</div><div class="au" style="left:1051px;top:1308px;width:84px">03..28</div><div class="au" style="left:1135px;top:1308px;width:62px">0..8</div>
<div class="au" style="left:1240px;top:1308px;width:84px">03..28</div><div class="au" style="left:1324px;top:1308px;width:84px">03..28</div><div class="au" style="left:1408px;top:1308px;width:84px">03..28</div><div class="au" style="left:1492px;top:1308px;width:84px">03..28</div>
<div class="au" style="left:1956px;top:1308px;width:84px">03..28</div><div class="au" style="left:2040px;top:1308px;width:84px">03..28</div><div class="au" style="left:2124px;top:1308px;width:84px">03..28</div><div class="au" style="left:2208px;top:1308px;width:84px">03..28</div><div class="au" style="left:2292px;top:1308px;width:84px">03..28</div><div class="au" style="left:2376px;top:1308px;width:84px">03..28</div><div class="au" style="left:2460px;top:1308px;width:84px">03..28</div><div class="au" style="left:2544px;top:1308px;width:84px">03..28</div>
<!-- Track 25 -->
<div class="au" style="left:1576px;top:1340px;width:84px">Am..2</div><div class="au" style="left:1660px;top:1340px;width:84px">Am..2</div><div class="au" style="left:1744px;top:1340px;width:84px">Am..2</div><div class="au" style="left:1828px;top:1340px;width:84px">Am..2</div>
<!-- Track 27 -->
<div class="au" style="left:1176px;top:1404px;width:22px"></div>
<div class="au" style="left:1750px;top:1404px;width:162px">TPS - F..ter 01</div>
</body></html>
